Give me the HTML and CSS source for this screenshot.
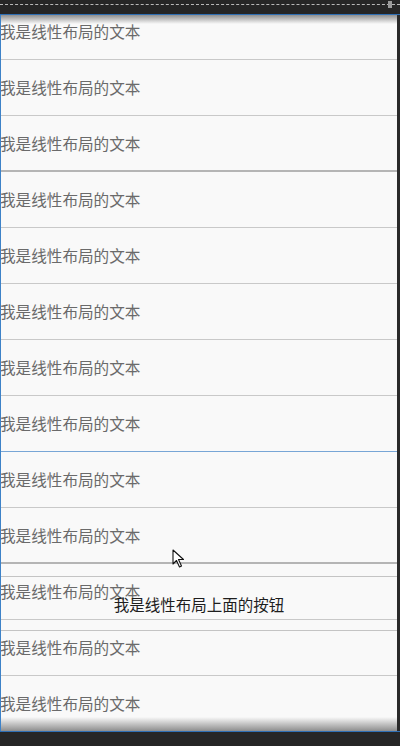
FILE: index.html
```html
<!DOCTYPE html>
<html lang="zh-CN">
<head>
    <meta charset="UTF-8">
    <meta name="viewport" content="width=device-width, initial-scale=1.0">
    <title>线性布局</title>
    <link rel="stylesheet" href="styles.css">
</head>
<body>
    <div class="screen">
        <div class="topbar">
            <div class="dashes"></div>
            <div class="handle"></div>
        </div>
        <div class="main">
            <div class="viewport">
                <ul class="list">
                    <li class="row">我是线性布局的文本</li>
                    <li class="row">我是线性布局的文本</li>
                    <li class="row row-strong">我是线性布局的文本</li>
                    <li class="row">我是线性布局的文本</li>
                    <li class="row">我是线性布局的文本</li>
                    <li class="row">我是线性布局的文本</li>
                    <li class="row">我是线性布局的文本</li>
                    <li class="row row-blue">我是线性布局的文本</li>
                    <li class="row">我是线性布局的文本</li>
                    <li class="row row-strong">我是线性布局的文本</li>
                    <li class="row">我是线性布局的文本</li>
                    <li class="row">我是线性布局的文本</li>
                    <li class="row">我是线性布局的文本</li>
                </ul>
                <div class="shade-top"></div>
                <div class="shade-bottom"></div>
                <button class="float-btn">我是线性布局上面的按钮</button>
                <svg class="cursor" width="14" height="20" viewBox="0 0 14 20">
                    <path d="M1 1 L1 15 L4.5 11.5 L7.5 18 L9.5 17 L6.5 10.5 L11.5 10.5 Z" fill="#fff" stroke="#111" stroke-width="1.1" stroke-linejoin="round"/>
                </svg>
            </div>
            <div class="edge"></div>
        </div>
        <div class="bottombar"></div>
    </div>
</body>
</html>
```

FILE: styles.css
```css
body {
    margin: 0;
    background-color: #242424;
    font-family: "Noto Sans CJK SC", "Noto Sans", sans-serif;
}
.screen {
    width: 400px;
    height: 746px;
    display: flex;
    flex-direction: column;
    overflow: hidden;
}
.topbar {
    position: relative;
    height: 14px;
    background-color: #262626;
    border-bottom: 1px solid #2f6fb4;
}
.dashes {
    position: absolute;
    left: 0;
    right: 0;
    top: 4px;
    border-top: 1px dashed #b8b8b8;
}
.handle {
    position: absolute;
    right: 8px;
    top: 1px;
    width: 4px;
    height: 7px;
    background-color: #9a9a9a;
}
.main {
    display: flex;
    height: 716px;
}
.viewport {
    position: relative;
    flex: 1;
    overflow: hidden;
    background-color: #f9f9f9;
    border-left: 1px solid #3d82c8;
}
.edge {
    width: 3px;
    background-color: #2a2a2a;
}
.list {
    list-style: none;
    margin: -11px 0 0 -1px;
    padding: 0;
}
.row {
    height: 54px;
    padding-bottom: 1px;
    display: flex;
    align-items: center;
    font-size: 15.6px;
    color: #6a6a6a;
    border-bottom: 1px solid #c9c9c9;
}
.row-strong {
    border-bottom: 2px solid #b5b5b5;
    height: 53px;
}
.row-blue {
    border-bottom-color: #78a6d6;
}
.shade-top {
    position: absolute;
    left: 0;
    right: 0;
    top: 0;
    height: 9px;
    background: linear-gradient(#8f8f8f, rgba(249, 249, 249, 0));
}
.shade-bottom {
    position: absolute;
    left: 0;
    right: 0;
    bottom: 0;
    height: 14px;
    background: linear-gradient(rgba(249, 249, 249, 0), #8e8e8e);
}
.float-btn {
    position: absolute;
    left: 0;
    right: 0;
    top: 561px;
    height: 55px;
    margin: 0;
    padding: 0;
    background: transparent;
    border: none;
    border-top: 1px solid #c4c4c4;
    border-bottom: 1px solid #c4c4c4;
    font-family: "Noto Sans CJK SC", "Noto Sans", sans-serif;
    font-size: 15.5px;
    color: #1e1e1e;
}
.cursor {
    position: absolute;
    left: 171px;
    top: 534px;
}
.bottombar {
    height: 14px;
    background-color: #262626;
    border-top: 1px solid #2f6fb4;
}
```
